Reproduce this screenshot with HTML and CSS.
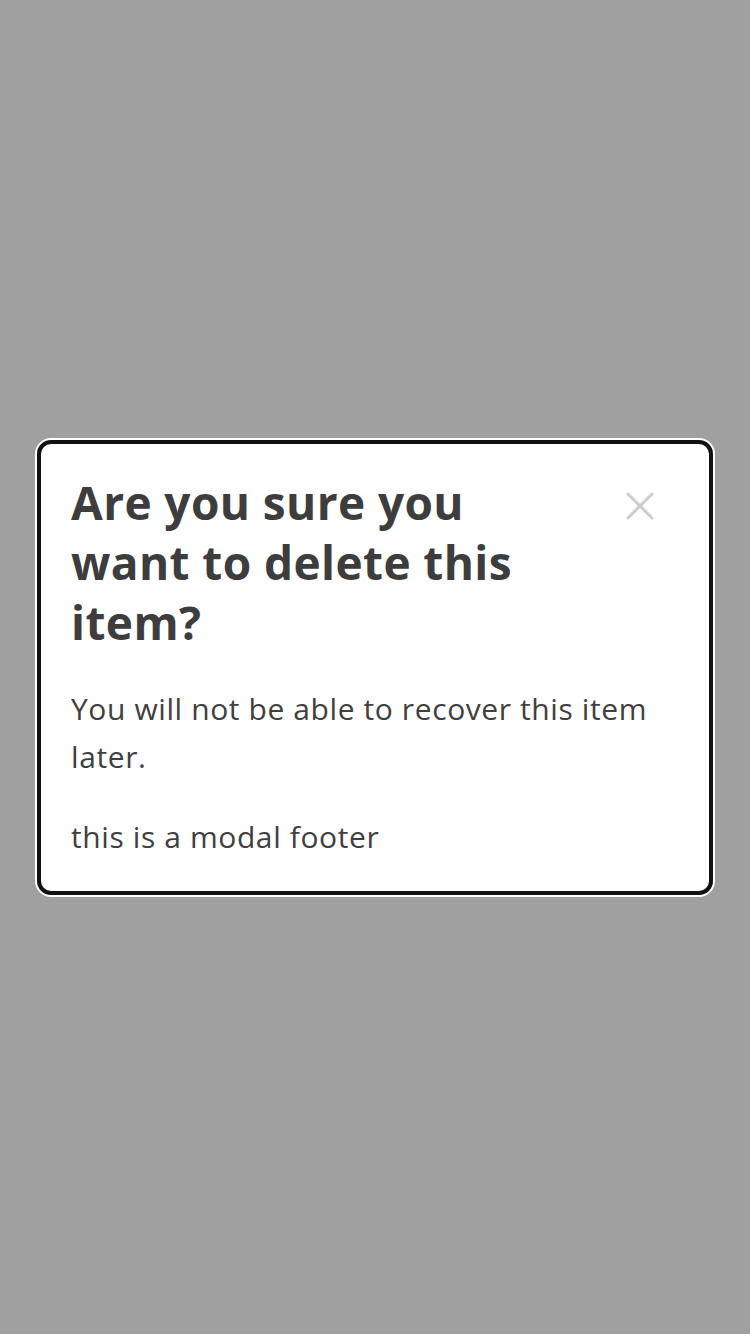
FILE: index.html
```html
<!DOCTYPE html>
<html lang="en">
<head>
<meta charset="utf-8">
<title>Modal</title>
<link rel="stylesheet" href="styles.css">
</head>
<body>
<div class="overlay">
  <div class="modal" role="dialog" aria-modal="true">
    <div class="modal-header">
      <h2 class="modal-title">Are you sure you want to delete this item?</h2>
      <button class="modal-close" aria-label="Close">
        <svg width="28" height="28" viewBox="0 0 28 28" aria-hidden="true">
          <path d="M2 2 L26 26 M26 2 L2 26" stroke="#cccccc" stroke-width="3" stroke-linecap="round" fill="none"/>
        </svg>
      </button>
    </div>
    <p class="modal-body">You will not be able to recover this item later.</p>
    <p class="modal-footer">this is a modal footer</p>
  </div>
</div>
</body>
</html>
```
FILE: styles.css
```css
html, body {
  margin: 0;
  padding: 0;
  height: 100%;
}
body {
  background: #a0a0a0;
  font-family: "Open Sans", "Lato", sans-serif;
  color: #404040;
}
.overlay {
  min-height: 100%;
  display: flex;
  align-items: center;
  justify-content: center;
  padding: 0 37px;
  box-sizing: border-box;
}
.modal {
  width: 100%;
  box-sizing: border-box;
  background: #ffffff;
  border: 4px solid #111111;
  border-radius: 14px;
  box-shadow: 0 0 0 2px #ffffff;
  padding: 28px 30px 30px 30px;
}
.modal-header {
  display: flex;
  align-items: flex-start;
  justify-content: space-between;
}
.modal-title {
  width: 480px;
  margin: 0;
  font-size: 46px;
  line-height: 60px;
  font-weight: 700;
  letter-spacing: 0.4px;
  color: #3d3d3d;
}
.modal-close {
  flex: none;
  width: 48px;
  height: 48px;
  margin: 10px 15px 0 0;
  padding: 0;
  border: 0;
  background: transparent;
  display: flex;
  align-items: center;
  justify-content: center;
  cursor: pointer;
}
.modal-body {
  margin: 33px 0 0 0;
  font-size: 30px;
  line-height: 48px;
  letter-spacing: 0.6px;
}
.modal-footer {
  margin: 32px 0 0 0;
  font-size: 30px;
  line-height: 48px;
  letter-spacing: 0.6px;
}
```
